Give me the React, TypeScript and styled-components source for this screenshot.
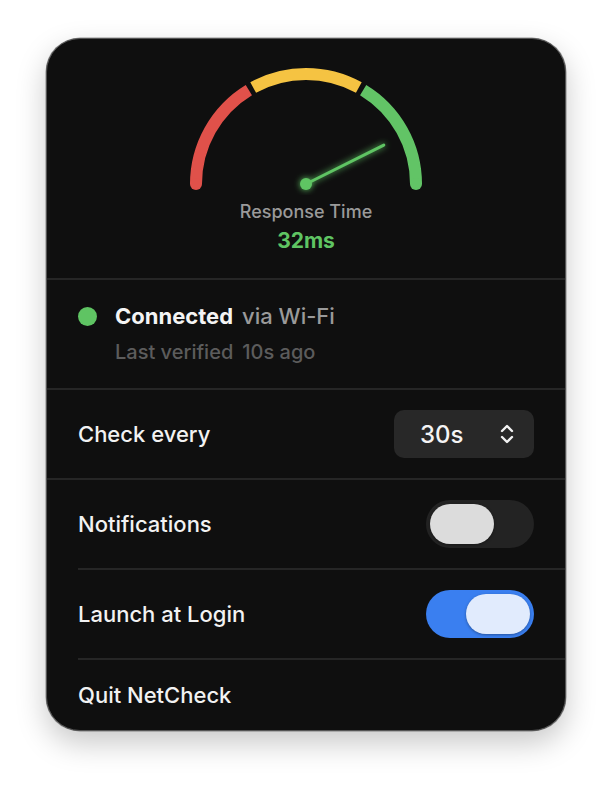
import React from "react";
import styled, { createGlobalStyle } from "styled-components";

const GlobalStyle = createGlobalStyle`
  html, body {
    margin: 0;
    padding: 0;
    background: #ffffff;
  }
  * {
    box-sizing: border-box;
  }
`;

const Page = styled.div`
  width: 612px;
  height: 786px;
  padding-top: 38px;
  font-family: Inter, "Noto Sans", sans-serif;
`;

const Panel = styled.div`
  width: 520px;
  height: 693px;
  margin: 0 auto;
  background: #0f0f0f;
  border: 1.5px solid #545454;
  border-radius: 34px;
  box-shadow: 0 12px 30px rgba(0, 0, 0, 0.22), 0 0 0 0.5px rgba(0, 0, 0, 0.4);
  display: flex;
  flex-direction: column;
  overflow: hidden;
`;

const GaugeSection = styled.div`
  height: 241px;
  padding-top: 22px;
  display: flex;
  flex-direction: column;
  align-items: center;
  border-bottom: 2px solid #262626;
`;

const GaugeLabel = styled.div`
  margin-top: 6px;
  font-size: 18px;
  line-height: 22px;
  color: #9a9a9a;
  font-weight: 500;
`;

const GaugeValue = styled.div`
  margin-top: 5px;
  font-size: 21px;
  line-height: 26px;
  font-weight: 700;
  color: #5fc463;
`;

const StatusSection = styled.div`
  height: 110px;
  padding: 23px 31px 0;
  display: flex;
  flex-direction: column;
  gap: 10px;
  border-bottom: 2px solid #262626;
`;

const StatusLine = styled.div`
  display: flex;
  align-items: center;
  font-size: 22px;
  line-height: 26px;
`;

const Dot = styled.span`
  width: 19px;
  height: 19px;
  border-radius: 50%;
  background: #5fc463;
  margin-right: 18px;
`;

const Strong = styled.span`
  color: #f4f4f4;
  font-weight: 700;
  margin-right: 9px;
`;

const Muted = styled.span<{ $dim?: boolean }>`
  color: ${(p) => (p.$dim ? "#5c5c5c" : "#9a9a9a")};
  font-weight: 500;
`;

const SubLine = styled.div`
  padding-left: 37px;
  font-size: 20px;
  line-height: 26px;
  display: flex;
  gap: 9px;
`;

const Row = styled.div<{ $inset?: boolean; $last?: boolean }>`
  height: ${(p) => (p.$last ? "auto" : "90px")};
  flex: ${(p) => (p.$last ? "1" : "none")};
  margin-left: ${(p) => (p.$inset ? "31px" : "0")};
  padding: ${(p) => (p.$inset ? "0 31px 0 0" : "0 31px")};
  display: flex;
  align-items: center;
  justify-content: space-between;
  border-bottom: ${(p) => (p.$last ? "none" : "2px solid #262626")};
`;

const Label = styled.span`
  font-size: 22px;
  color: #f2f2f2;
  font-weight: 500;
`;

const Select = styled.div`
  width: 140px;
  height: 48px;
  border-radius: 10px;
  background: #282828;
  display: flex;
  align-items: center;
  justify-content: space-between;
  padding: 0 20px 0 26px;
  font-size: 24px;
  color: #f4f4f4;
  font-weight: 500;
`;

const Track = styled.div<{ $on: boolean }>`
  width: 108px;
  height: 48px;
  border-radius: 24px;
  padding: 4px;
  background: ${(p) => (p.$on ? "#3a7ff0" : "#232323")};
  display: flex;
  justify-content: ${(p) => (p.$on ? "flex-end" : "flex-start")};
`;

const Knob = styled.div<{ $on: boolean }>`
  width: 64px;
  height: 40px;
  border-radius: 20px;
  background: ${(p) => (p.$on ? "#e1ebfd" : "#dcdcdc")};
  box-shadow: 0 1px 3px rgba(0, 0, 0, 0.35);
`;

const Toggle: React.FC<{ on: boolean }> = ({ on }) => (
  <Track $on={on}>
    <Knob $on={on} />
  </Track>
);

// polar helper, angle in degrees measured counter-clockwise from +x
const pt = (cx: number, cy: number, r: number, a: number) => {
  const rad = (a * Math.PI) / 180;
  return [cx + r * Math.cos(rad), cy - r * Math.sin(rad)];
};

const arc = (cx: number, cy: number, r: number, from: number, to: number) => {
  const [x1, y1] = pt(cx, cy, r, from);
  const [x2, y2] = pt(cx, cy, r, to);
  return `M ${x1} ${y1} A ${r} ${r} 0 0 1 ${x2} ${y2}`;
};

const Gauge: React.FC = () => {
  const cx = 130;
  const cy = 123;
  const r = 110;
  const [nx, ny] = pt(cx, cy, 87, 26.6);
  return (
    <svg width="260" height="134" viewBox="0 0 260 134">
      <defs>
        <filter id="glow" x="-50%" y="-50%" width="200%" height="200%">
          <feGaussianBlur stdDeviation="3" result="b" />
          <feMerge>
            <feMergeNode in="b" />
            <feMergeNode in="SourceGraphic" />
          </feMerge>
        </filter>
      </defs>
      <path d={arc(cx, cy, r, 180, 121.3)} stroke="#e0514a" strokeWidth="12" fill="none" />
      <path d={arc(cx, cy, r, 118.7, 61.3)} stroke="#f5c342" strokeWidth="12" fill="none" />
      <path d={arc(cx, cy, r, 58.7, 0)} stroke="#62c466" strokeWidth="12" fill="none" />
      <circle cx={cx - r} cy={cy} r="6" fill="#e0514a" />
      <circle cx={cx + r} cy={cy} r="6" fill="#62c466" />
      <g filter="url(#glow)">
        <line x1={cx} y1={cy} x2={nx} y2={ny} stroke="#5fc463" strokeWidth="3" strokeLinecap="round" />
        <circle cx={cx} cy={cy} r="6" fill="#5fc463" />
      </g>
    </svg>
  );
};

const Chevrons: React.FC = () => (
  <svg width="14" height="22" viewBox="0 0 14 22" fill="none">
    <path d="M2 8 L7 3 L12 8" stroke="#f2f2f2" strokeWidth="2.4" strokeLinecap="round" strokeLinejoin="round" />
    <path d="M2 14 L7 19 L12 14" stroke="#f2f2f2" strokeWidth="2.4" strokeLinecap="round" strokeLinejoin="round" />
  </svg>
);

export default function App() {
  return (
    <Page>
      <GlobalStyle />
      <Panel>
        <GaugeSection>
          <Gauge />
          <GaugeLabel>Response Time</GaugeLabel>
          <GaugeValue>32ms</GaugeValue>
        </GaugeSection>
        <StatusSection>
          <StatusLine>
            <Dot />
            <Strong>Connected</Strong>
            <Muted>via Wi-Fi</Muted>
          </StatusLine>
          <SubLine>
            <Muted $dim>Last verified</Muted>
            <Muted $dim>10s ago</Muted>
          </SubLine>
        </StatusSection>
        <Row>
          <Label>Check every</Label>
          <Select>
            <span>30s</span>
            <Chevrons />
          </Select>
        </Row>
        <Row $inset>
          <Label>Notifications</Label>
          <Toggle on={false} />
        </Row>
        <Row $inset>
          <Label>Launch at Login</Label>
          <Toggle on={true} />
        </Row>
        <Row $last>
          <Label>Quit NetCheck</Label>
        </Row>
      </Panel>
    </Page>
  );
}
